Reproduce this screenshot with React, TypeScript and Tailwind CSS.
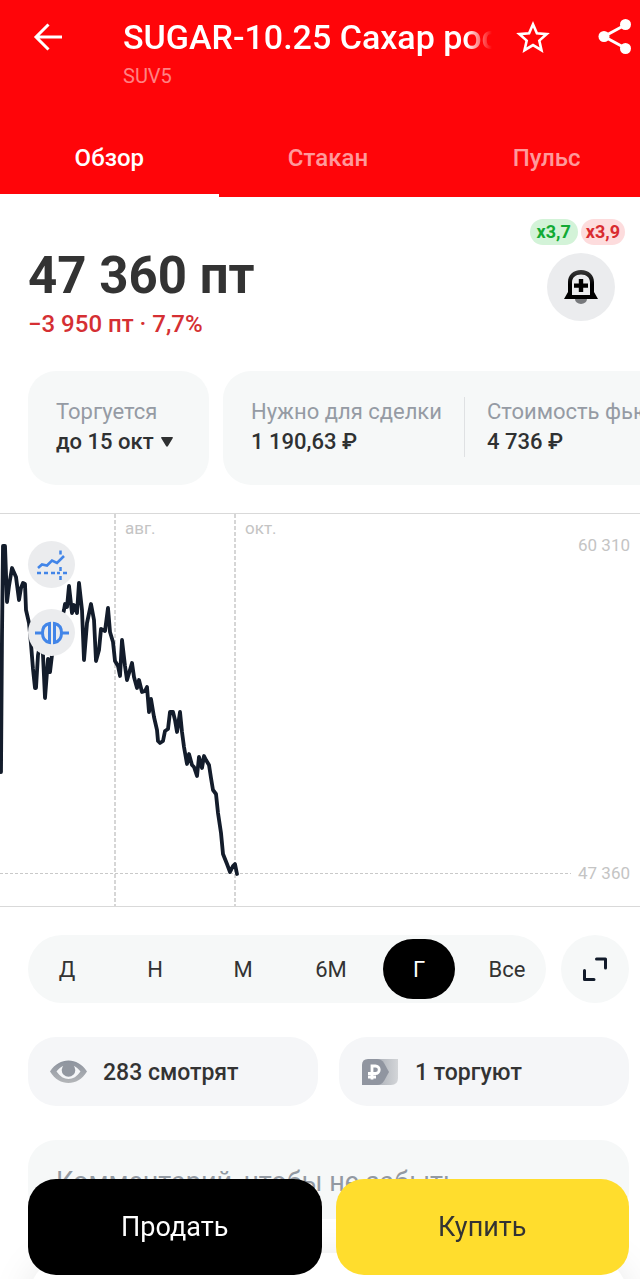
import { useState } from 'react';
import clsx from 'clsx';

const TABS = ['Обзор', 'Стакан', 'Пульс'];
const PERIODS = ['Д', 'Н', 'М', '6М', 'Г', 'Все'];

const CHART_POINTS =
  '1,258 2,120 3,32 5,32 7,88 9,72 12,54 16,63 19,86 21,74 23,69 25,70 26,96 29,109 31,130 33,155 35,174 36,174 38,141 42,120 45,184 48,145 50,158 52,141 57,120 62,104 64,96 65,90 67,93 69,72 72,99 74,91 77,99 79,69 82,96 84,146 87,109 91,90 94,106 96,147 99,136 101,115 105,117 108,94 110,118 113,128 115,147 118,152 120,162 122,126 125,152 127,166 132,149 134,163 137,174 139,166 142,178 145,177 147,173 149,198 151,185 154,203 157,216 158,227 160,229 163,227 165,217 168,215 170,198 173,198 175,206 177,218 180,198 182,218 184,233 187,250 189,240 192,251 194,253 197,262 199,243 202,254 204,242 206,246 209,251 211,264 213,276 216,280 218,299 221,319 223,340 227,350 230,358 233,352 235,350 237,360';

function Header({ tab, onTabChange }: { tab: string; onTabChange: (tab: string) => void }) {
  return (
    <header className="flex-shrink-0 overflow-hidden bg-[#ff0509] text-white">
      <div className="flex items-start pt-4 pl-8 pr-2">
        <button type="button" aria-label="Назад" className="mt-[5px] flex-shrink-0">
          <svg width="32" height="32" viewBox="0 0 32 32" fill="none" stroke="currentColor" strokeWidth="3">
            <path d="M30 16H5M16.5 3.5L4 16l12.5 12.5" />
          </svg>
        </button>
        <div className="ml-[59px] min-w-0 flex-1">
          <h1 className="overflow-hidden whitespace-nowrap text-[34px] leading-[42px] font-medium [mask-image:linear-gradient(to_right,black_93%,transparent)]">
            SUGAR-10.25 Сахар российский
          </h1>
          <p className="mt-1 text-xl leading-7 text-white/50">SUV5</p>
        </div>
        <button type="button" aria-label="В избранное" className="ml-[23px] mt-[3px] flex-shrink-0">
          <svg width="36" height="36" viewBox="0 0 36 36" fill="none" stroke="currentColor" strokeWidth="2.6">
            <path d="M18 5.2l3.9 9 9.8.9-7.4 6.5 2.2 9.6-8.5-5.1-8.5 5.1 2.2-9.6-7.4-6.5 9.8-.9z" />
          </svg>
        </button>
        <button type="button" aria-label="Поделиться" className="ml-[47px] mt-[2px] flex-shrink-0">
          <svg width="34" height="36" viewBox="0 0 34 36" fill="currentColor">
            <path d="M28 6.5L6 18.5l22 12" fill="none" stroke="currentColor" strokeWidth="3" />
            <circle cx="27.5" cy="6.5" r="5.5" />
            <circle cx="6" cy="18.5" r="5.5" />
            <circle cx="27.5" cy="30.5" r="5.5" />
          </svg>
        </button>
      </div>
      <nav role="tablist" className="mt-[30px] -mr-4 grid grid-cols-3">
        {TABS.map((name) => (
          <button
            key={name}
            type="button"
            role="tab"
            aria-selected={name === tab}
            onClick={() => onTabChange(name)}
            className={clsx(
              'h-[77px] border-b-[3px] pt-px text-2xl font-medium',
              name === tab ? 'border-white text-white' : 'border-transparent text-white/60'
            )}
          >
            {name}
          </button>
        ))}
      </nav>
    </header>
  );
}

function PriceBlock() {
  return (
    <section className="flex justify-between pt-[22px] pl-7 pr-[15px]">
      <div className="pt-[27px]">
        <p className="text-[51px] leading-[60px] font-bold text-[#333333]">47 360 пт</p>
        <p className="mt-1 text-2xl leading-7 font-medium text-[#d52f33]">−3 950 пт · 7,7%</p>
      </div>
      <div className="flex flex-col items-end">
        <div className="flex gap-[3px] text-lg leading-[26px] font-bold">
          <span className="rounded-full bg-[#d3f3d8] px-[7px] text-[#12aa35]">x3,7</span>
          <span className="rounded-full bg-[#fddcdd] px-[5px] text-[#d92b30]">x3,9</span>
        </div>
        <button
          type="button"
          aria-label="Уведомить о цене"
          className="mt-2 mr-[10px] flex size-[68px] items-center justify-center rounded-full bg-[#ebecee]"
        >
          <svg width="34" height="36" viewBox="0 0 34 36">
            <defs>
              <linearGradient id="bell" x1="0" y1="0" x2="0" y2="1">
                <stop offset="0" stopColor="#3a3a3a" />
                <stop offset="0.5" stopColor="#000" />
              </linearGradient>
            </defs>
            <path d="M11 30h12a6 5 0 0 1-12 0z" fill="#77797c" />
            <path
              fillRule="evenodd"
              fill="url(#bell)"
              d="M17 1C9 1 4 6 4 13v10L0 30h34l-4-7V13C30 6 25 1 17 1zM17 5.5c5.5 0 9 3 9 8V26H8V13.5c0-5 3.5-8 9-8z"
            />
            <path d="M14.8 10h4.4v4.5H24v4.2h-4.800V23h-4.400v-4.300H10v-4.200h4.800z" />
          </svg>
        </button>
      </div>
    </section>
  );
}

function Fact({ label, value }: { label: string; value: string }) {
  return (
    <div>
      <p className="text-[22px] leading-[30px] text-[#959ba4]">{label}</p>
      <p className="text-[22px] leading-[30px] font-medium text-[#2f3132]">{value}</p>
    </div>
  );
}

function ContractFacts() {
  return (
    <section className="mt-[33px] flex gap-[14px] overflow-hidden whitespace-nowrap pl-7">
      <button type="button" className="w-[181px] flex-shrink-0 rounded-[28px] bg-[#f6f8f8] pt-[26px] pb-7 pl-7 text-left">
        <span className="block text-[22px] leading-[30px] text-[#959ba4]">Торгуется</span>
        <span className="flex items-center gap-[7px] text-[22px] leading-[30px] font-medium text-[#2f3132]">
          до 15 окт
          <svg width="12" height="10" viewBox="0 0 12 10" fill="currentColor">
            <path d="M1 0h10q1.5 0 .7 1.3L7 9q-1 1.500-2 0L.3 1.300Q-.5 0 1 0z" />
          </svg>
        </span>
      </button>
      <div className="flex flex-shrink-0 rounded-[28px] bg-[#f6f8f8] px-7 pt-[26px] pb-7">
        <Fact label="Нужно для сделки" value="1 190,63 ₽" />
        <div className="ml-[22px] border-l border-[#dfe1e3] pl-[22px]">
          <Fact label="Стоимость фьючерса" value="4 736 ₽" />
        </div>
      </div>
    </section>
  );
}

function PriceChart() {
  return (
    <section className="relative mt-7 h-[394px] overflow-hidden border-y border-[#d9d9d9] text-[17px] leading-5 text-[#c4c4c4]">
      <svg width="640" height="392" viewBox="0 0 640 392" fill="none">
        <path d="M115 0v392M235 0v392" stroke="#c9c9c9" strokeWidth="1.5" strokeDasharray="4 2" />
        <path d="M0 359.5h571" stroke="#c9c9c9" strokeDasharray="3 2" />
        <polyline points={CHART_POINTS} stroke="#131c2b" strokeWidth="3.8" strokeLinejoin="round" strokeLinecap="round" />
      </svg>
      <span className="absolute top-1 left-[125px]">авг.</span>
      <span className="absolute top-1 left-[245px]">окт.</span>
      <span className="absolute top-[21px] right-[10px]">60 310</span>
      <span className="absolute top-[349px] right-[10px]">47 360</span>

      {/* Chart tools */}
      <div className="absolute top-[27px] left-7 flex flex-col gap-[21px] text-[#4285e8]">
        <button type="button" aria-label="Индикаторы" className="flex size-[47px] items-center justify-center rounded-full bg-[#ebecee]">
          <svg width="32" height="32" viewBox="0 0 32 32" fill="none" stroke="currentColor" strokeWidth="2.5">
            <path d="M2 19l4-3.500 5 1 5-5 5 2.500 7-7" strokeWidth="2.6" />
            <path d="M1 24h4M8 24h4M15 24h4M21 24h3M27 24h4M24.500 1.500v4M24.500 18v4M24.500 27v4" />
          </svg>
        </button>
        <button type="button" aria-label="Сравнить" className="flex size-[47px] items-center justify-center rounded-full bg-[#ebecee]">
          <svg width="36" height="24" viewBox="0 0 36 24" fill="none" stroke="currentColor" strokeWidth="3">
            <path d="M15.500 2.500C10.500 3.500 8.500 7 8.500 12s2 8.500 7 9.500zM20.500 2.500c5 1 7 4.500 7 9.500s-2 8.500-7 9.500z" />
            <path d="M1 12h7M28 12h7" />
          </svg>
        </button>
      </div>
    </section>
  );
}

function PeriodPicker() {
  const [period, setPeriod] = useState('Г');

  return (
    <section className="mt-7 flex gap-[15px] pl-7 pr-[11px]">
      <div className="flex h-[68px] flex-1 items-center justify-between rounded-full bg-[#f6f8f8] px-[3px]">
        {PERIODS.map((name) => (
          <button
            key={name}
            type="button"
            aria-pressed={name === period}
            onClick={() => setPeriod(name)}
            className={clsx(
              'h-[60px] w-[72px] rounded-full text-[22px]',
              name === period ? 'bg-black text-white' : 'text-[#333333]'
            )}
          >
            {name}
          </button>
        ))}
      </div>
      <button
        type="button"
        aria-label="На весь экран"
        className="flex size-[68px] items-center justify-center rounded-full bg-[#f6f8f8] text-[#131c2b]"
      >
        <svg width="24" height="24" viewBox="0 0 24 24" fill="none" stroke="currentColor" strokeWidth="3" strokeLinecap="round" strokeLinejoin="round">
          <path d="M13.500 2h9v9M1.500 13.500v9h9.500" />
        </svg>
      </button>
    </section>
  );
}

function Stats() {
  return (
    <section className="mt-[34px] grid grid-cols-2 gap-[21px] pl-7 pr-[11px] text-[23px] font-medium text-[#333333]">
      <div className="flex h-[69px] items-center gap-4 rounded-[28px] bg-[#f5f6f8] pl-[22px]">
        <svg width="37" height="24" viewBox="0 0 37 24">
          <defs>
            <linearGradient id="eye" x1="0" y1="0" x2="0" y2="1">
              <stop offset="0" stopColor="#8c929d" />
              <stop offset="1" stopColor="#b4b6b9" />
            </linearGradient>
          </defs>
          <path
            fillRule="evenodd"
            fill="url(#eye)"
            d="M0 11.500C5 4 11.500.5 18.500.5S32 4 37 11.500C32 19.500 25.500 23 18.500 23S5 19.500 0 11.500zM6.500 11.500C10 16.500 14 19 18.500 19s8.500-2.500 12-7.500C28.500 9 26.500 7 24 6H13c-2.500 1-4.500 3-6.500 5.500z"
          />
          <circle cx="18.5" cy="10" r="6.8" fill="#9297a0" />
        </svg>
        <span className="pt-1">283 смотрят</span>
      </div>
      <div className="flex h-[69px] items-center gap-4 rounded-[28px] bg-[#f5f6f8] pl-[22px]">
        <svg width="38" height="26" viewBox="0 0 38 26">
          <defs>
            <linearGradient id="tag" x1="0" y1="0" x2="1" y2="0">
              <stop offset="0.4" stopColor="#b4b8bf" />
              <stop offset="1" stopColor="#d3d5d8" />
            </linearGradient>
          </defs>
          <path d="M8 0h29v19q0 7-7 7H8z" fill="url(#tag)" />
          <path d="M7 0h9q4.500 0 7 4l5 9-5 9q-2.500 4-7 4H1V6q0-6 6-6z" fill="#9095a0" />
          <path d="M11 20.500V7h3.500a3.700 3.700 0 0 1 0 7.500H7M7 18h8" fill="none" stroke="#fff" strokeWidth="2.8" />
        </svg>
        <span className="pt-1">1 торгуют</span>
      </div>
    </section>
  );
}

function TradeBar() {
  return (
    <footer className="fixed inset-x-0 bottom-0 grid grid-cols-2 gap-[14px] pb-1 pl-7 pr-[11px] text-[27px]">
      <button type="button" className="h-24 rounded-[28px] bg-black text-white">
        Продать
      </button>
      <button type="button" className="h-24 rounded-[28px] bg-[#ffdd2d] text-[#333333]">
        Купить
      </button>
    </footer>
  );
}

export default function App() {
  const [tab, setTab] = useState('Обзор');

  return (
    <div className="flex h-screen flex-col bg-white font-[Roboto,sans-serif]">
      <Header tab={tab} onTabChange={setTab} />
      <main className="min-h-0 flex-1 overflow-x-hidden overflow-y-auto [scrollbar-width:none]">
        <PriceBlock />
        <ContractFacts />
        <PriceChart />
        <PeriodPicker />
        <Stats />
        <div className="mt-[34px] pl-7 pr-[11px]">
          <input
            type="text"
            aria-label="Комментарий"
            placeholder="Комментарий, чтобы не забыть"
            className="h-[79px] w-full rounded-[28px] bg-[#f6f8f8] px-7 pt-1 text-[27px] placeholder:text-[#9299a2]"
          />
        </div>
        {/* Next card peeks out from under the trade bar */}
        <div className="mt-[34px] mr-[11px] ml-7 h-32 rounded-[48px] bg-white shadow-[0_4px_40px_rgba(0,0,0,0.1)]" />
      </main>
      <TradeBar />
    </div>
  );
}
